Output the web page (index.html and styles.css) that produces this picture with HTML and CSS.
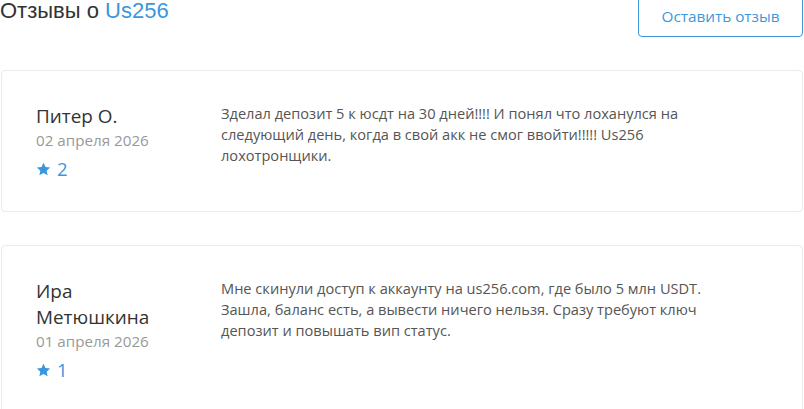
FILE: index.html
```html
<!DOCTYPE html>
<html lang="ru">
<head>
<meta charset="utf-8">
<link rel="stylesheet" href="styles.css">
</head>
<body>
<div class="page">
  <div class="header">
    <h2 class="title">Отзывы о <span class="brand">Us256</span></h2>
    <a class="btn" href="#">Оставить отзыв</a>
  </div>

  <div class="review">
    <div class="author">
      <div class="name">Питер О.</div>
      <div class="date">02 апреля 2026</div>
      <div class="rating">
        <svg class="star" viewBox="0 0 24 24" width="15" height="15"><path d="M12 1.2l3.2 6.8 7.4.9-5.5 5.1 1.5 7.3L12 17.7l-6.6 3.6 1.5-7.3-5.5-5.1 7.4-.9z"/></svg>
        <span class="num">2</span>
      </div>
    </div>
    <div class="text">Зделал депозит 5 к юсдт на 30 дней!!!! И понял что лоханулся на<br>следующий день, когда в свой акк не смог ввойти!!!!! Us256<br>лохотронщики.</div>
  </div>

  <div class="review">
    <div class="author">
      <div class="name">Ира Метюшкина</div>
      <div class="date">01 апреля 2026</div>
      <div class="rating">
        <svg class="star" viewBox="0 0 24 24" width="15" height="15"><path d="M12 1.2l3.2 6.8 7.4.9-5.5 5.1 1.5 7.3L12 17.7l-6.6 3.6 1.5-7.3-5.5-5.1 7.4-.9z"/></svg>
        <span class="num">1</span>
      </div>
    </div>
    <div class="text">Мне скинули доступ к аккаунту на us256.com, где было 5 млн USDT.<br>Зашла, баланс есть, а вывести ничего нельзя. Сразу требуют ключ<br>депозит и повышать вип статус.</div>
  </div>
</div>
</body>
</html>
```

FILE: styles.css
```css
html, body {
  margin: 0;
  padding: 0;
  background: #fff;
}
body {
  font-family: "Open Sans", "Liberation Sans", sans-serif;
  color: #555;
  overflow: hidden;
}
.page {
  width: 803px;
  margin-top: -7px;
}
.header {
  display: flex;
  justify-content: space-between;
  align-items: flex-start;
}
.title {
  margin: 7px 0 0 0;
  font-family: "Liberation Sans", Arial, sans-serif;
  font-weight: normal;
  font-size: 22px;
  line-height: 22px;
  color: #333;
}
.brand {
  color: #3a97de;
}
.btn {
  display: block;
  box-sizing: border-box;
  width: 165px;
  height: 44px;
  padding: 12px 0 0;
  text-align: center;
  border: 1px solid #3c97dd;
  border-radius: 4px;
  color: #3c97dd;
  font-size: 15.3px;
  line-height: 20px;
  text-decoration: none;
}
.review {
  display: flex;
  margin: 33px 0 0 1px;
  padding: 32px 34px 30px;
  border: 1px solid #ebebeb;
  border-radius: 4px;
}
.review + .review {
  margin-top: 33px;
}
.author {
  width: 132px;
  flex: none;
  margin-right: 53px;
}
.name {
  font-size: 18.9px;
  line-height: 26px;
  color: #333;
}
.date {
  font-size: 15.2px;
  line-height: 22px;
  color: #999;
}
.rating {
  display: flex;
  align-items: center;
  gap: 6px;
  margin-top: 6px;
  height: 24px;
  color: #3a97de;
}
.star {
  fill: #3a97de;
}
.num {
  font-size: 18.5px;
  line-height: 24px;
}
.text {
  flex: 1;
  font-size: 14.6px;
  line-height: 21px;
  color: #555;
  white-space: nowrap;
}
```
